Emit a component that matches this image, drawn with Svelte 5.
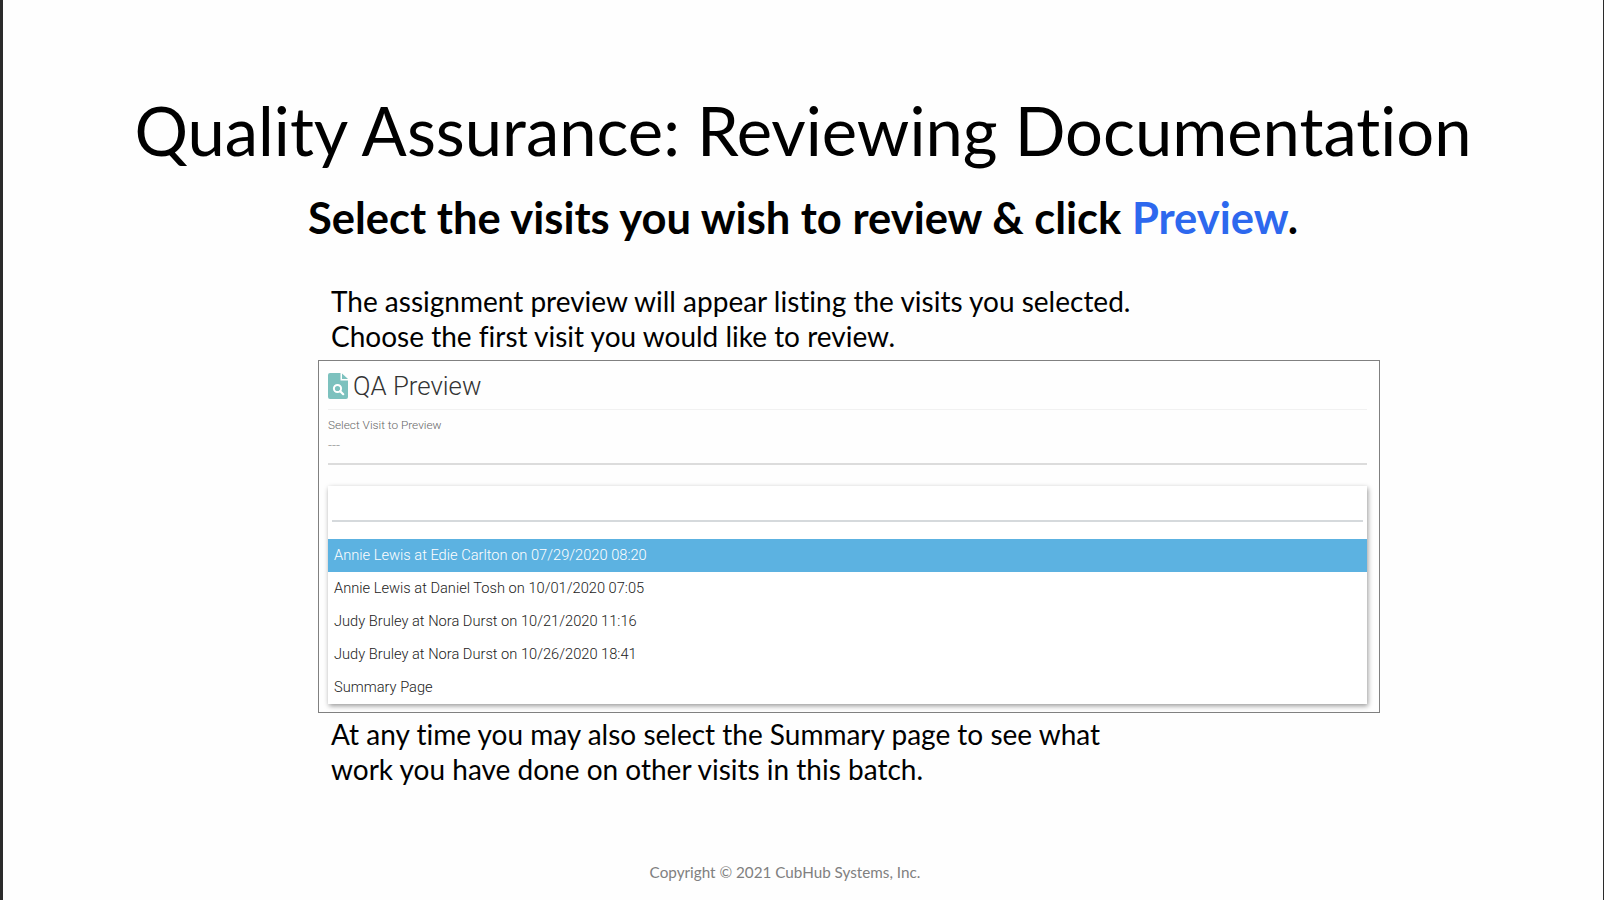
<script>
  const visits = [
    'Annie Lewis at Edie Carlton on 07/29/2020 08:20',
    'Annie Lewis at Daniel Tosh on 10/01/2020 07:05',
    'Judy Bruley at Nora Durst on 10/21/2020 11:16',
    'Judy Bruley at Nora Durst on 10/26/2020 18:41',
    'Summary Page'
  ];
</script>

<main class="slide">
  <h1>Quality Assurance: Reviewing Documentation</h1>
  <h2>Select the visits you wish to review &amp; click <span class="blue">Preview</span>.</h2>

  <section class="content">
    <p class="note">The assignment preview will appear listing the visits you selected.<br />Choose the first visit you would like to review.</p>

    <div class="shot">
      <div class="head">
        <svg class="icon" viewBox="0 0 20 26" width="20" height="26">
          <path d="M2 0H12.5V7.5H20V24a2 2 0 0 1-2 2H2a2 2 0 0 1-2-2V2a2 2 0 0 1 2-2Z" fill="#7cc1be" />
          <path d="M14 0.5L20 6H14Z" fill="#7cc1be" />
          <circle cx="9.5" cy="15.5" r="3.6" fill="none" stroke="#fff" stroke-width="2" />
          <path d="M12.2 18.2L15.2 21.2" stroke="#fff" stroke-width="2.2" stroke-linecap="round" />
        </svg>
        <span>QA Preview</span>
      </div>
      <div class="field">
        <div class="label">Select Visit to Preview</div>
        <div class="value">---</div>
      </div>
      <div class="menu">
        <div class="search"></div>
        <ul>
          {#each visits as visit, i}
            <li class:active={i === 0}>{visit}</li>
          {/each}
        </ul>
      </div>
    </div>

    <p class="note after">At any time you may also select the Summary page to see what<br />work you have done on other visits in this batch.</p>
  </section>

  <footer>Copyright © 2021 CubHub Systems, Inc.</footer>
</main>

<style>
  :global(body) {
    background: #fff;
  }

  .slide {
    box-sizing: border-box;
    width: 1604px;
    height: 900px;
    overflow: hidden;
    display: flex;
    flex-direction: column;
    align-items: center;
    border-left: 3px solid #2b2b2b;
    border-right: 1px solid #2b2b2b;
    background: #fefefe;
    color: #000;
    font-family: "Lato", "Liberation Sans", sans-serif;
    font-variant-ligatures: none;
  }

  h1 {
    margin: 88px 0 0;
    font-size: 66.9px;
    line-height: 84px;
    font-weight: 400;
    white-space: nowrap;
  }

  h2 {
    margin: 20px 0 0;
    font-size: 43.5px;
    line-height: 50px;
    font-weight: 700;
    white-space: nowrap;
  }

  .blue {
    color: #2d68ee;
  }

  .content {
    align-self: flex-start;
    margin: 42px 0 0 315px;
    width: 1062px;
  }

  .note {
    margin: 0 0 0 13px;
    font-size: 28px;
    line-height: 35px;
    white-space: nowrap;
  }

  .note.after {
    margin-top: 4px;
  }

  .shot {
    box-sizing: border-box;
    height: 353px;
    margin-top: 6px;
    padding: 0 12px 0 9px;
    border: 1.5px solid #808080;
    font-family: "Roboto", sans-serif;
  }

  .head {
    display: flex;
    align-items: center;
    gap: 5px;
    height: 46px;
    padding-top: 2px;
    border-bottom: 1px solid #f1f1f1;
    color: #333;
    font-size: 25.8px;
    font-weight: 300;
  }

  .icon {
    flex: none;
  }

  .field {
    height: 53px;
    border-bottom: 2px solid #dcdcdc;
    font-weight: 300;
    color: #666;
  }

  .label {
    padding-top: 7px;
    font-size: 11.8px;
    line-height: 16px;
  }

  .value {
    margin-top: 4px;
    font-size: 14px;
    line-height: 16px;
    color: #999;
  }

  .menu {
    margin-top: 21px;
    background: #fff;
    box-shadow: 1px 2px 5px rgba(0, 0, 0, 0.4);
  }

  .search {
    height: 34px;
    margin: 0 4px 17px;
    border-bottom: 2px solid #d5d9dc;
  }

  ul {
    list-style: none;
    margin: 0;
    padding: 0;
  }

  li {
    height: 33px;
    padding-left: 6px;
    line-height: 33px;
    font-size: 14.65px;
    font-weight: 300;
    color: #222;
    white-space: nowrap;
  }

  li.active {
    background: #5cb2e1;
    color: #fff;
  }

  footer {
    margin: auto 36px 18px 0;
    font-size: 15.25px;
    line-height: 20px;
    color: #808080;
  }
</style>
